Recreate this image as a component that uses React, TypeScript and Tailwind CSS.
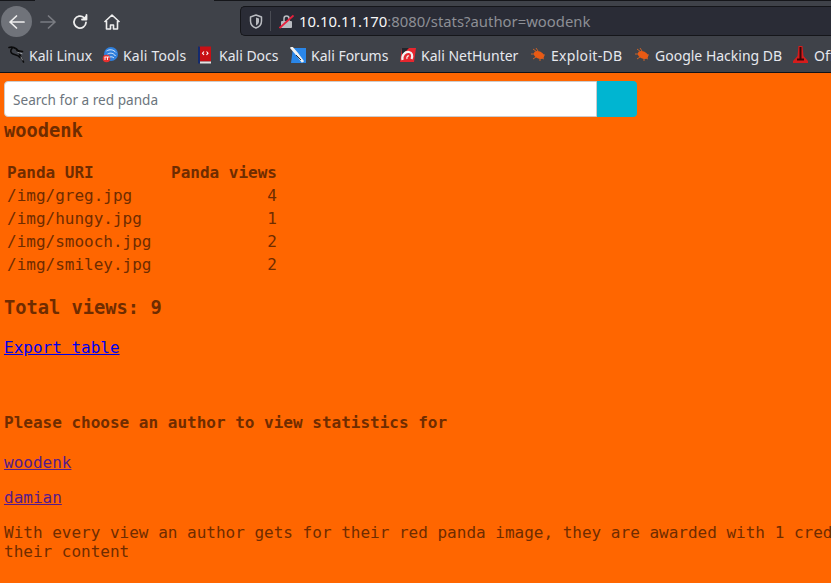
const ui = { fontFamily: '"Noto Sans", sans-serif' };

function KaliIcon() {
  return (
    <svg width="17" height="18" viewBox="0 0 17 18" fill="none" strokeLinecap="round">
      <path d="M1 1.500c3-1 5.500 0 7.500 1.500 2 1.500 3 3.500 3.500 6 .5 2 2 3.500 3.500 7" stroke="#0b0b0c" strokeWidth="1.600" />
      <path d="M4 2.500C2 4.500 2.500 7 5 8s5.500 1 7 3.500M9 4.500l5.500 1" stroke="#0b0b0c" strokeWidth="1.600" />
      <path d="M10 6.500l4 1.200M13 11l1.500 3" stroke="#c9cbd0" strokeWidth="0.700" />
    </svg>
  );
}
function ToolsIcon() {
  return (
    <svg width="16" height="16" viewBox="0 0 16 16">
      <circle cx="9" cy="7" r="7" fill="#2f7fdc" />
      <path d="M4.500 4c3-2 7-1.500 9.500 1.500M5.500 7c3-1.500 6-1 8 2M8 10c1.500-.5 3 0 4 1" stroke="#d8e9fb" strokeWidth="1" fill="none" />
      <circle cx="4.500" cy="11.500" r="3.800" fill="#e8302e" />
      <path d="M3 10v3M5.500 10v3M2.500 10h5" stroke="#fff" strokeWidth="0.900" />
    </svg>
  );
}
function DocsIcon() {
  return (
    <svg width="13" height="18" viewBox="0 0 13 18">
      <rect x="1" y="0.500" width="12" height="15" fill="#c80f14" />
      <rect x="0" y="0.500" width="2" height="17" fill="#142a6e" />
      <rect x="2" y="15.500" width="11" height="2" fill="#e4e4e4" />
      <path d="M6 5.500 4.500 7.200 6 9M8.500 5.500 10 7.200 8.500 9" stroke="#fff" strokeWidth="1.100" fill="none" />
    </svg>
  );
}
function ForumsIcon() {
  return (
    <svg width="16" height="16" viewBox="0 0 16 16">
      <path d="M3 1h13v15H1z" fill="#2a86e8" />
      <path d="M1 0l6 7 6 8" stroke="#f2f2f2" strokeWidth="2.800" fill="none" />
      <path d="M6 8l5 5" stroke="#2a2d33" strokeWidth="1" />
    </svg>
  );
}
function HunterIcon() {
  return (
    <svg width="16" height="15" viewBox="0 0 16 15">
      <path d="M2 1h14l-2 14H0z" fill="#e7262e" />
      <path d="M2 1h7L2 8z" fill="#22252b" />
      <path d="M2.500 13C1.500 8 5 4.500 9 5c3 .5 4 3.500 2.500 7" stroke="#f2f2f2" strokeWidth="2.200" fill="none" />
      <path d="M7 12c-.5-2 .5-3.500 2-3" stroke="#f2f2f2" strokeWidth="1.200" fill="none" />
    </svg>
  );
}
function BugIcon() {
  return (
    <svg width="16" height="13" viewBox="0 0 16 13">
      <ellipse cx="9" cy="7" rx="5.500" ry="3.600" transform="rotate(25 9 7)" fill="#e85a14" />
      <path d="M1 6h3M3 1l4 3M6 0l2 3M3 11l3-2M10 13l0-3M15 7h-2M14 11l-2-1" stroke="#c9632a" strokeWidth="1" />
    </svg>
  );
}
function OffsecIcon() {
  return (
    <svg width="15" height="18" viewBox="0 0 15 18">
      <path d="M5.500 0h4l1 10 4.500 5v2H0v-2l4.500-5z" fill="#d51c1c" />
      <rect x="6.500" y="1" width="2" height="13" fill="#3a0606" />
      <rect x="4" y="12.500" width="7" height="2" fill="#3a0606" />
    </svg>
  );
}

const bookmarks = [
  { icon: <KaliIcon />, label: "Kali Linux", w: "w-[94px]", t: "" },
  { icon: <ToolsIcon />, label: "Kali Tools", w: "w-[96px]", t: "tracking-[0.2px]" },
  { icon: <DocsIcon />, label: "Kali Docs", w: "w-[92px]", t: "" },
  { icon: <ForumsIcon />, label: "Kali Forums", w: "w-[110px]", t: "" },
  { icon: <HunterIcon />, label: "Kali NetHunter", w: "w-[130px]", t: "" },
  { icon: <BugIcon />, label: "Exploit-DB", w: "w-[104px]", t: "tracking-[0.3px]" },
  { icon: <BugIcon />, label: "Google Hacking DB", w: "w-[159px]", t: "" },
  { icon: <OffsecIcon />, label: "OffSec", w: "w-[70px]", t: "" },
];

export default function App() {
  return (
    <div className="w-[831px] h-[583px] overflow-hidden bg-[#ff6600] flex flex-col">
      <div className="h-[6px] shrink-0 bg-[#3f4249] flex items-start">
        <div className="w-[35px] h-px bg-[#15161a]" />
        <div className="w-[179px] h-px" />
        <div className="flex-1 h-px bg-[#15161a]" />
      </div>
      <div className="h-[31px] shrink-0 bg-[#3f4249] flex items-start pl-[1px]" style={ui}>
        <div className="w-[31px] h-[31px] shrink-0 rounded-full bg-[#70737a] flex items-center justify-center">
          <svg width="18" height="18" viewBox="0 0 18 18" fill="none" stroke="#eeeeee" strokeWidth="1.700" strokeLinecap="round" strokeLinejoin="round">
            <path d="M16 9H2M8.500 3 2 9l6.500 6" />
          </svg>
        </div>
        <div className="w-[32px] h-[31px] flex items-center justify-center shrink-0">
          <svg width="18" height="18" viewBox="0 0 18 18" fill="none" stroke="#7a7c82" strokeWidth="1.700" strokeLinecap="round" strokeLinejoin="round">
            <path d="M2 9h14M9.500 3 16 9l-6.500 6" />
          </svg>
        </div>
        <div className="w-[31px] h-[31px] flex items-center justify-center shrink-0">
          <svg width="18" height="18" viewBox="0 0 18 18" fill="none" stroke="#eeeeee" strokeWidth="1.800" strokeLinecap="round" strokeLinejoin="round">
            <path d="M15 9.500A6 6 0 1 1 13 4.600" />
            <path d="M15.500 2v4.500H11" fill="#eeeeee" />
          </svg>
        </div>
        <div className="w-[31px] h-[31px] flex items-center justify-center shrink-0 pl-[3px]">
          <svg width="18" height="18" viewBox="0 0 18 18" fill="none" stroke="#eeeeee" strokeWidth="1.600" strokeLinejoin="round">
            <path d="M1.500 9 9 2l7.500 7M3.500 8v8h4v-4h3v4h4V8" />
          </svg>
        </div>
        <div className="ml-[114px] w-[600px] h-[30px] shrink-0 rounded-l-[5px] bg-[#2a2c36] border-y border-l border-[#15161a] flex items-center pl-[8px] text-[14.85px] whitespace-nowrap">
          <svg width="14" height="15" viewBox="0 0 14 15" fill="none" stroke="#b9bbc0" strokeWidth="1.500" strokeLinejoin="round">
            <path d="M7 1l5.500 2v4c0 3.500-2.500 6-5.500 7-3-1-5.500-3.500-5.500-7V3z" />
            <path d="M7 3.500 10 4.600v2.600c0 2-1.200 3.300-3 4.200z" fill="#b9bbc0" stroke="none" />
          </svg>
          <div className="w-px h-[20px] bg-[#4a4c54] ml-[7px] mr-[8px]" />
          <svg width="15" height="15" viewBox="0 0 15 15" className="mr-[5px]">
            <path d="M5 7V4.500a2.500 2.500 0 0 1 5 0V7" fill="none" stroke="#b9bbc0" strokeWidth="1.500" />
            <rect x="2" y="7" width="11" height="7" rx="1" fill="#b9bbc0" />
            <path d="M0.500 14 14.500 1.500" stroke="#e8203c" strokeWidth="1.800" />
          </svg>
          <span className="text-[#f7f7f8]">10.10.11.170</span>
          <span className="text-[#8d8f95]">:8080/stats?author=woodenk</span>
        </div>
      </div>
      <div className="h-[35px] shrink-0 bg-[#3f4249] border-b border-b-[#111216] flex items-center pl-[8px] text-[14px] text-[#e6e8ee] whitespace-nowrap box-content" style={ui}>
        {bookmarks.map((b) => (
          <div key={b.label} className={`${b.w} shrink-0 flex items-center`}>
            <span className="w-[21px] shrink-0 flex">{b.icon}</span>
            <span className={`pt-[2px] ${b.t}`}>{b.label}</span>
          </div>
        ))}
      </div>

      <div className="flex-1 text-[#6f2c00] text-[16px] leading-[normal] pl-[4px] whitespace-nowrap" style={{ fontFamily: '"DejaVu Sans Mono", monospace' }}>
        <div className="flex mt-[8px] w-[633px] h-[36px]">
          <div className="w-[593px] h-[36px] bg-white rounded-l-[4px] border border-[#cccccc] flex items-center pl-[8px] text-[13.6px] text-[#6c757d]" style={ui}>
            Search for a red panda
          </div>
          <div className="w-[40px] h-[36px] bg-[#00b5d1] rounded-r-[4px]" />
        </div>
        <h3 className="text-[18.72px] font-bold mt-[3px] leading-[22px]">woodenk</h3>
        <table className="mt-[18px] border-separate border-spacing-[2px]">
          <thead>
            <tr className="h-[21px]">
              <th className="w-[162px] text-left font-bold p-[1px]">Panda URI</th>
              <th className="text-left font-bold p-[1px]">Panda views</th>
            </tr>
          </thead>
          <tbody>
            {[["greg", 4], ["hungy", 1], ["smooch", 2], ["smiley", 2]].map(([n, v]) => (
              <tr key={n} className="h-[21px]">
                <td className="p-[1px]">/img/{n}.jpg</td>
                <td className="p-[1px] text-right">{v}</td>
              </tr>
            ))}
          </tbody>
        </table>
        <h3 className="text-[18.72px] font-bold mt-[20px] leading-[22px]">Total views: 9</h3>
        <p className="mt-[19px]"><a href="#" className="text-[#0000ee] underline">Export table</a></p>
        <p className="font-bold mt-[56px]">Please choose an author to view statistics for</p>
        <p className="mt-[21px]"><a href="#" className="text-[#551a8b] underline">woodenk</a></p>
        <p className="mt-[16px]"><a href="#" className="text-[#551a8b] underline">damian</a></p>
        <p className="mt-[16px]">With every view an author gets for their red panda image, they are awarded with 1 credit<br />their content</p>
      </div>
    </div>
  );
}
